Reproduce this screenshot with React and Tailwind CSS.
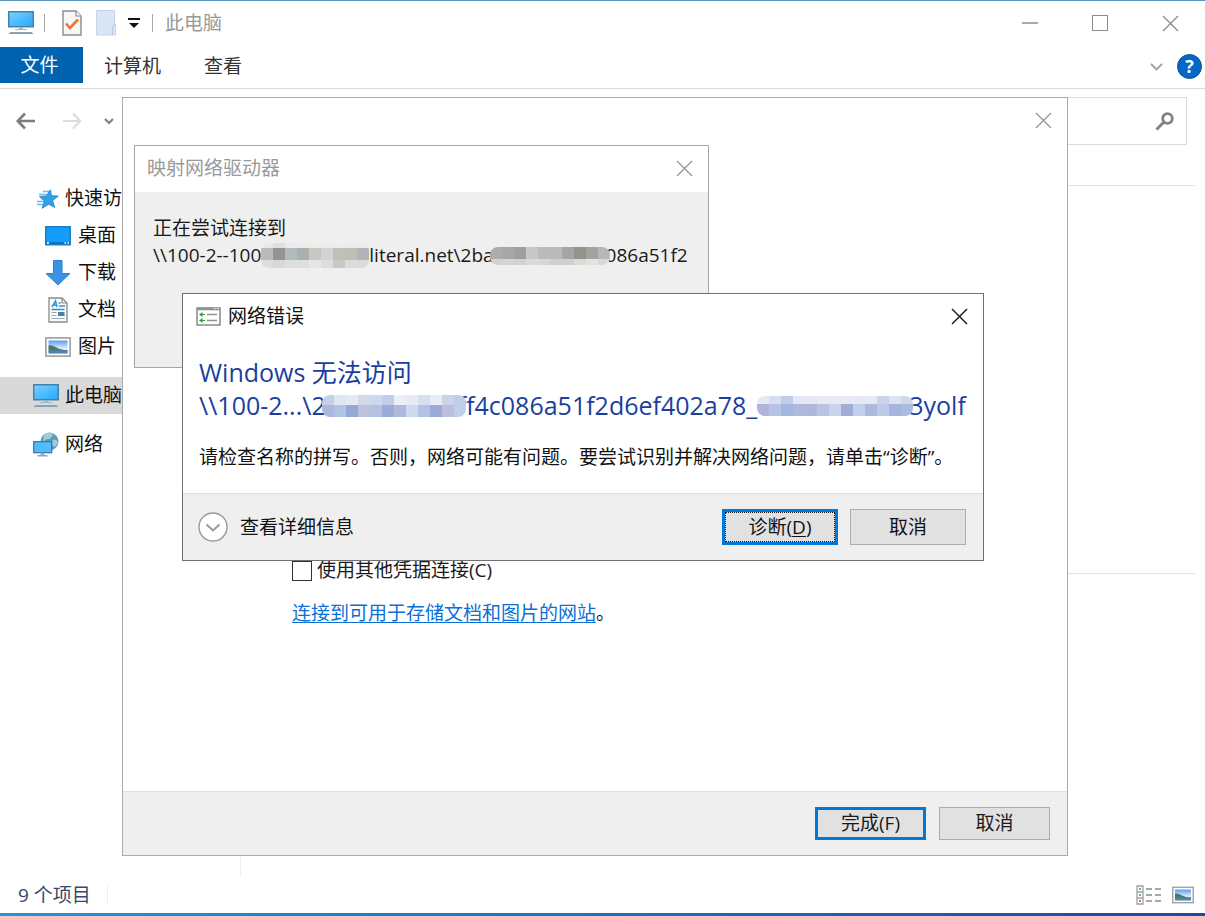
import React from "react";

const UI_FONT =
  "font-['Open_Sans','Noto_Sans_CJK_SC',sans-serif] text-[19px] leading-[27px]";

function CloseIcon() {
  return (
    <svg width="17" height="17" viewBox="0 0 17 17" fill="none" stroke="currentColor" strokeWidth="1.4">
      <path d="M1 1 L16 16 M16 1 L1 16" />
    </svg>
  );
}

function MonitorIcon() {
  return (
    <svg width="26" height="24" viewBox="0 0 26 24">
      <defs>
        <linearGradient id="screen" x1="0" y1="0" x2="1" y2="1">
          <stop offset="0" stopColor="#7fd0ff" />
          <stop offset="0.5" stopColor="#4fbcff" />
          <stop offset="1" stopColor="#2ba8f5" />
        </linearGradient>
      </defs>
      <rect x="0.75" y="0.75" width="24.5" height="15" fill="url(#screen)" stroke="#3c7fa8" strokeWidth="1.4" />
      <path d="M11 16.5h4v1.5h4v1H7v-1h4z" fill="#9fb6c6" />
      <path d="M2.5 21h21l2 2h-25z" fill="#8ba3b5" />
    </svg>
  );
}

function CheckPageIcon() {
  return (
    <svg width="20" height="26" viewBox="0 0 20 26" fill="none">
      <path d="M1 1h13l5 5v19H1z" fill="#f7f7f7" stroke="#8a8a8a" strokeWidth="1.4" />
      <path d="M14 1v5h5" stroke="#8a8a8a" strokeWidth="1.2" fill="#fff" />
      <path d="M4 13.5l4 4.5 8-8.5" stroke="#f0743a" strokeWidth="2.6" />
    </svg>
  );
}

function BlankPageIcon() {
  return (
    <svg width="20" height="26" viewBox="0 0 20 26">
      <path d="M0.5 0.5h18v13.5h1v11H0.5z" fill="#dae5f5" stroke="#c6d4ea" />
      <path d="M16.5 25v-8l2-2.5" fill="none" stroke="#b9c9e2" />
    </svg>
  );
}

function StarIcon() {
  return (
    <svg width="22" height="20" viewBox="0 0 22 20">
      <path d="M6 2.500h6M2 5.500h7M0 12.500h7M0 15.500h6" stroke="#65bdf0" strokeWidth="1.300" />
      <path d="M13.500 0.800l1 6 6.800 0.200-5.600 4.500 2 7-6-3.200-6.500 4 2.200-7.300-5-4.500 6.600-.5z" fill="#2fa2e8" stroke="#1d83c8" strokeWidth="0.800" />
    </svg>
  );
}

function DesktopIcon() {
  return (
    <svg width="26" height="20" viewBox="0 0 26 20">
      <rect x="0.75" y="0.75" width="24.500" height="18" fill="#149dfb" stroke="#1479c4" strokeWidth="1.4" />
      <path d="M1.500 17h23" stroke="#0a6cb8" strokeWidth="1.600" />
      <path d="M2 17h2M19.500 17h1.500M22.500 17h1.500" stroke="#fff" strokeWidth="1.400" />
    </svg>
  );
}

function DownloadIcon() {
  return (
    <svg width="26" height="26" viewBox="0 0 26 26">
      <path d="M8.500 0.500h8.500v13h8L13 25 1 13.500h7.500z" fill="#3a94e6" stroke="#2a80cf" />
    </svg>
  );
}

function DocumentIcon() {
  return (
    <svg width="20" height="26" viewBox="0 0 20 26" fill="none">
      <path d="M1 1h13l5 5v19H1z" fill="#fafafa" stroke="#8a8a8a" strokeWidth="1.300" />
      <path d="M14 1v5h5" stroke="#8a8a8a" strokeWidth="1.200" />
      <path d="M4 10l3.500-6 1.500 6M5.500 8h3M10.500 6h2M11 9h6M3.500 12.500h13" stroke="#2d93d8" strokeWidth="1.500" />
      <path d="M3.500 15.500h5M3.500 18.500h5M3.500 21.500h13" stroke="#9aa5ae" strokeWidth="1.200" />
      <path d="M10 15h6.500v4H10z" fill="#3e84ad" />
    </svg>
  );
}

function PictureIcon({ small }) {
  return (
    <svg width={small ? 22 : 26} height={small ? 18 : 20} viewBox="0 0 26 20">
      <defs>
        <linearGradient id="sky" x1="0" y1="0" x2="0" y2="1">
          <stop offset="0" stopColor="#5b9bf2" />
          <stop offset="0.600" stopColor="#dcebfa" />
          <stop offset="1" stopColor="#e8f3fa" />
        </linearGradient>
      </defs>
      <rect x="0.900" y="0.900" width="24.200" height="18.200" fill="#fff" stroke="#a3a3a3" strokeWidth="1.700" />
      <rect x="3.500" y="3.500" width="19" height="13" fill="url(#sky)" />
      <path d="M3.500 8.500c3-1 6 1 9 2.500s6 2 10 2v1.500h-19z" fill="#4a7a63" />
      <path d="M3.500 13.500c6-.5 12 0 19-.5v3.500h-19z" fill="#4f83ac" />
    </svg>
  );
}

function NetworkIcon() {
  return (
    <svg width="26" height="26" viewBox="0 0 26 26">
      <circle cx="16.500" cy="9.500" r="9" fill="#5b9dbb" />
      <path d="M11 3c3-3 8-3 9 0-2 2-2 4-5 4s-3 3-5 2zM20 8c3-1 5 1 5 3l-3 4-4-3z" fill="#9fcbdc" />
      <rect x="0.700" y="9.700" width="18" height="11" fill="#4fbdfd" stroke="#3477a0" strokeWidth="1.200" />
      <path d="M7.500 21.500h4v1.500h3v1.500h-10v-1.500h3z" fill="#8fa8ba" />
    </svg>
  );
}

function DialogIcon() {
  return (
    <svg width="25" height="19" viewBox="0 0 25 19" fill="none">
      <rect x="1" y="1" width="23" height="17" fill="#fff" stroke="#8d9296" strokeWidth="1.600" />
      <path d="M1 2h23" stroke="#8d9296" strokeWidth="2.500" />
      <path d="M18 1.500h1.500M21 1.500h1.500" stroke="#fff" />
      <path d="M11 7.500h10M11 13.500h10" stroke="#8d9296" strokeWidth="1.300" />
      <path d="M3 7.500l3.500-2.500v2h2.500v1H6.500v2zM3 13.500l3.500-2.500v2h2.500v1H6.500v2z" fill="#2f9e44" />
    </svg>
  );
}

// Pixelated strip that hides part of an address.
function Mosaic({ id, rows, heights, className }) {
  const width = rows[0].length * 12;
  const height = heights.reduce((a, b) => a + b, 0);
  let y = 0;
  return (
    <svg className={className} width={width} height={height} viewBox={`0 0 ${width} ${height}`} aria-hidden="true">
      <clipPath id={id}>
        <rect width={width} height={height} rx="8" />
      </clipPath>
      <g clipPath={`url(#${id})`}>
        {rows.map((row, r) => {
          const top = y;
          y += heights[r];
          return row.map((color, c) => (
            <rect key={`${r}-${c}`} x={c * 12} y={top} width="12" height={heights[r]} fill={color} />
          ));
        })}
      </g>
    </svg>
  );
}

const greyA = [
  ["#e9e9e9", "#dfdfde", "#eaeaea", "#ececec", "#ededed", "#ebebec", "#ededed", "#ececec", "#ececec"],
  ["#bcbab6", "#969392", "#b1bbbf", "#adafac", "#cac7c3", "#d3d2d5", "#c0bfb9", "#c2beb4", "#b0b3b8"],
  ["#dcdddd", "#d8d8d8", "#dddfdf", "#dedede", "#e6e6e6", "#dedede", "#c8c8c6", "#dcdcdc", "#dadada"],
];
const greyB = [
  ["#acacae", "#a7a8a4", "#9f9f9f", "#c9c8c9", "#bdbabb", "#b9babb", "#a5a6a2", "#91938c", "#a3a49f", "#b5b7ba"],
  ["#d2d2d3", "#d4d4d4", "#d3d3d3", "#dadada", "#d7d7d7", "#cfcfd0", "#d0d0cf", "#dbdbda", "#e3e3e2", "#d8d8d8"],
];
const blueA = [
  ["#c4cfe9", "#e0e7f4", "#e5eaf6", "#d4d9eb", "#ccd8ec", "#c3cfe8", "#ebeff8", "#e7ebf5", "#d6def0", "#e8ecf7", "#cbd3e8", "#c2cde7"],
  ["#adb9dc", "#afc3e3", "#98a8d6", "#bdc2dc", "#b5c1e2", "#9cacda", "#afb9dc", "#cdd9ec", "#b3c2e2", "#9babd8", "#bcbedb", "#bed0eb"],
];
const blueB = [
  ["#e5e9f5", "#d6def0", "#c2cce8", "#e4e8f4", "#e4e9f5", "#e7ebf6", "#e7ebf6", "#e6eaf5", "#e4e9f5", "#e6eaf6", "#cbd4ea", "#dce2f1", "#d0d9ec"],
  ["#b1b6d9", "#b5c3e4", "#a4b8df", "#b0b8db", "#acb8dc", "#b9c4e2", "#cad3e9", "#a1add7", "#c0d0ea", "#afb9dc", "#bdcae7", "#a6b5dd", "#a8bce1"],
];

const NAV = [
  { label: "快速访问", icon: <StarIcon />, pad: "pl-[37px] gap-[6px]" },
  { label: "桌面", icon: <DesktopIcon />, pad: "pl-[45px] gap-[7px]" },
  { label: "下载", icon: <DownloadIcon />, pad: "pl-[45px] gap-[7px]" },
  { label: "文档", icon: <DocumentIcon />, pad: "pl-[48px] gap-[10px]" },
  { label: "图片", icon: <PictureIcon />, pad: "pl-[45px] gap-[7px]" },
  { label: "此电脑", icon: <MonitorIcon />, pad: "pl-[33px] gap-[6px] mt-3 bg-[#d9d9d9]" },
  { label: "网络", icon: <NetworkIcon />, pad: "pl-[33px] gap-[6px] mt-3" },
];

function Explorer() {
  return (
    <div className="flex min-h-screen flex-col border-t border-[#5b93bd] bg-white">
      <header className="flex h-[44px] items-center justify-between">
        <div className="flex items-center pl-2 text-[#999]">
          <MonitorIcon />
          <span className="ml-[10px] h-[18px] w-px bg-[#a8a8a8]" />
          <button aria-label="属性" className="ml-[17px]"><CheckPageIcon /></button>
          <button aria-label="新建文件夹" className="ml-[14px]"><BlankPageIcon /></button>
          <button aria-label="自定义快速访问工具栏" className="ml-3">
            <svg width="12" height="10" viewBox="0 0 12 10">
              <path d="M0 1h12" stroke="#111" strokeWidth="2" />
              <path d="M1 5h10L6 10z" fill="#111" />
            </svg>
          </button>
          <span className="ml-3 h-[18px] w-px bg-[#a8a8a8]" />
          <h1 className="ml-3">此电脑</h1>
        </div>
        <div className="flex text-[#8c8c8c]">
          <button aria-label="最小化" className="flex h-9 w-[70px] items-center justify-center">
            <svg width="16" height="2"><path d="M0 1h16" stroke="currentColor" strokeWidth="1.500" /></svg>
          </button>
          <button aria-label="最大化" className="flex h-9 w-[70px] items-center justify-center">
            <span className="h-4 w-4 border border-current" />
          </button>
          <button aria-label="关闭" className="flex h-9 w-[70px] items-center justify-center">
            <CloseIcon />
          </button>
        </div>
      </header>

      <div className="flex h-[44px] items-start justify-between border-b border-[#dcdcdc] pt-[2px]">
        <nav className="flex text-[#333]">
          <button className="h-9 w-[83px] bg-[#0063b1] pr-1 text-white">文件</button>
          <button className="ml-[21px] h-9 pt-[2px]">计算机</button>
          <button className="ml-[43px] h-9 pt-[2px]">查看</button>
        </nav>
        <div className="flex items-center gap-[14px] pt-[7px] pr-[3px]">
          <button aria-label="展开功能区">
            <svg width="13" height="8" viewBox="0 0 13 8" fill="none" stroke="#a0a0a0" strokeWidth="1.800">
              <path d="M1 1l5.500 5.500L12 1" />
            </svg>
          </button>
          <button aria-label="帮助" className="flex h-[25px] w-[25px] items-center justify-center rounded-full border border-[#164f86] bg-[#0568c8] text-[18px] font-bold text-white">
            ?
          </button>
        </div>
      </div>

      <div className="flex items-center justify-between pt-2 pr-[18px] pl-4">
        <div className="flex items-center">
          <button aria-label="后退">
            <svg width="20" height="18" viewBox="0 0 20 18" fill="none" stroke="#7d7d7d" strokeWidth="2.600">
              <path d="M19 9H2M9 1.500L1.800 9 9 16.500" />
            </svg>
          </button>
          <button aria-label="前进" className="ml-[26px]">
            <svg width="20" height="18" viewBox="0 0 20 18" fill="none" stroke="#dcdcdc" strokeWidth="2.200">
              <path d="M1 9h17M11 1.500L18.200 9 11 16.500" />
            </svg>
          </button>
          <button aria-label="最近位置" className="ml-[22px]">
            <svg width="10" height="7" viewBox="0 0 10 7" fill="none" stroke="#808080" strokeWidth="2.200">
              <path d="M1 1l4 4 4-4" />
            </svg>
          </button>
        </div>
        <label className="flex h-[48px] w-[340px] items-center border border-[#dcdcdc] pr-3">
          <input aria-label="搜索" className="min-w-0 flex-1 bg-transparent outline-none" />
          <svg width="19" height="19" viewBox="0 0 19 19" fill="none" stroke="#828282">
            <circle cx="12.500" cy="6.500" r="4.800" strokeWidth="2.800" />
            <path d="M9 10L1.500 17.500" strokeWidth="3" />
          </svg>
        </label>
      </div>

      <div className="flex flex-1">
        <aside className="w-[241px] border-r border-[#f0f0f0] pt-[35px]">
          <ul>
            {NAV.map((n) => (
              <li key={n.label}>
                <a href="#" className={`flex h-[37px] items-center text-[#111] ${n.pad}`}>
                  {n.icon}
                  <span>{n.label}</span>
                </a>
              </li>
            ))}
          </ul>
        </aside>
        <main className="flex-1 pt-10 pr-[10px]">
          <hr className="border-[#e2e2e2]" />
          <hr className="mt-[387px] border-[#e2e2e2]" />
        </main>
      </div>

      <footer className="flex h-9 items-center justify-between pr-[11px] pl-[18px] text-[#34496b]">
        <div className="flex items-center gap-4">
          <span>9 个项目</span>
          <span className="h-[18px] w-px bg-[#eeeeee]" />
        </div>
        <div className="flex items-center gap-[10px]">
          <button aria-label="详细信息">
            <svg width="26" height="20" viewBox="0 0 26 20" fill="none">
              <path d="M1 1h6v18H1zM1 7h6M1 13h6" stroke="#a0a0a0" strokeWidth="1.300" />
              <path d="M10 4h6M19 4h6M10 10h6M19 10h6M10 16h6M19 16h6" stroke="#8c8c8c" strokeWidth="1.500" />
              <path d="M3 4h2" stroke="#3e9c60" strokeWidth="1.500" />
              <path d="M3 10h2" stroke="#2b8cf0" strokeWidth="1.500" />
              <path d="M3 16h2" stroke="#e33" strokeWidth="1.500" />
            </svg>
          </button>
          <button aria-label="大图标"><PictureIcon small /></button>
        </div>
      </footer>
      <div className="h-[3px] bg-gradient-to-r from-[#1b9ad0] to-[#1d4a9c]" />
    </div>
  );
}

function MapDriveWizard() {
  return (
    <section role="dialog" aria-label="映射网络驱动器向导" className="absolute top-[97px] left-[122px] flex h-[759px] w-[946px] flex-col border border-[#ababab] bg-white text-[#1a1a1a]">
      <div className="flex h-[44px] items-center justify-end pr-[15px] text-[#999]">
        <button aria-label="关闭"><CloseIcon /></button>
      </div>
      <div className="flex-1 pt-[415px] pl-[169px]">
        <label className="flex items-center gap-[5px]">
          <input type="checkbox" className="h-5 w-5 appearance-none border border-[#333] bg-white" />
          <span>使用其他凭据连接(C)</span>
        </label>
        <p className="mt-4">
          <a href="#" className="text-[#0a6fd6] underline underline-offset-2">连接到可用于存储文档和图片的网站</a>。
        </p>
      </div>
      <div className="flex h-[64px] items-center justify-end gap-[13px] border-t border-[#dfdfdf] bg-[#efefef] pr-[17px]">
        <button className="h-[33px] w-[111px] border-3 border-[#0078d7] bg-[#e1e1e1]">完成(F)</button>
        <button className="h-[33px] w-[111px] border border-[#adadad] bg-[#e1e1e1]">取消</button>
      </div>
    </section>
  );
}

function ConnectingDialog() {
  return (
    <section role="dialog" aria-label="映射网络驱动器" className="absolute top-[145px] left-[134px] flex h-[223px] w-[575px] flex-col border border-[#a6a6a6] bg-[#efefef] text-[#1a1a1a]">
      <div className="flex h-[46px] items-center justify-between bg-white pr-[15px] pb-[2px] pl-3 text-[#999]">
        <h2>映射网络驱动器</h2>
        <button aria-label="关闭"><CloseIcon /></button>
      </div>
      <div className="pt-[23px] pr-[19px] pl-[18px]">
        <p>正在尝试连接到</p>
        <p className="flex items-center whitespace-nowrap">
          <span>\\100-2--100</span>
          <Mosaic id="hide-host" rows={greyA} heights={[5, 12, 8]} className="relative shrink-0" />
          <span>literal.net\2ba</span>
          <Mosaic id="hide-share" rows={greyB} heights={[12, 6]} className="relative -mx-1 shrink-0" />
          <span>086a51f2</span>
        </p>
      </div>
    </section>
  );
}

function NetworkErrorDialog() {
  return (
    <section role="dialog" aria-label="网络错误" className="absolute top-[293px] left-[182px] flex h-[268px] w-[802px] flex-col border border-[#707070] bg-white text-[#111]">
      <div className="flex h-[45px] items-center justify-between pr-[15px] pl-[13px]">
        <div className="flex items-center gap-[7px]">
          <DialogIcon />
          <h2>网络错误</h2>
        </div>
        <button aria-label="关闭"><CloseIcon /></button>
      </div>
      <div className="flex-1 px-4 pt-[17px]">
        <div className="text-[25px] leading-[33px] text-[#1a3f9e]">
          <p>Windows 无法访问</p>
          <p className="flex items-center whitespace-nowrap">
            <span>\\100-2...\2</span>
            <Mosaic id="hide-first" rows={blueA} heights={[10, 12]} className="relative -mr-2 -ml-1 shrink-0" />
            <span>ff4c086a51f2d6ef402a78_</span>
            <Mosaic id="hide-last" rows={blueB} heights={[8, 12]} className="relative -mr-1 shrink-0" />
            <span>3yolf</span>
          </p>
        </div>
        <p className="mt-[22px] whitespace-nowrap">
          请检查名称的拼写。否则，网络可能有问题。要尝试识别并解决网络问题，请单击“诊断”。
        </p>
      </div>
      <div className="flex h-[67px] items-center justify-between border-t border-[#dfdfdf] bg-[#efefef] pr-[17px] pl-[15px]">
        <button className="flex items-center gap-3">
          <svg width="30" height="30" viewBox="0 0 30 30" fill="none">
            <circle cx="15" cy="15" r="14" fill="#fff" stroke="#999" strokeWidth="1.400" />
            <path d="M8.500 12.500l6.500 6 6.500-6" stroke="#999" strokeWidth="1.800" />
          </svg>
          <span>查看详细信息</span>
        </button>
        <div className="flex gap-3">
          <button className="h-9 w-[116px] border-3 border-[#0078d7] bg-[#e1e1e1]">
            <span className="flex h-full items-center justify-center border border-dotted border-[#111]">
              诊断(<u className="underline-offset-2">D</u>)
            </span>
          </button>
          <button className="h-9 w-[116px] border border-[#adadad] bg-[#e1e1e1]">取消</button>
        </div>
      </div>
    </section>
  );
}

export default function App() {
  return (
    <div className={`relative min-h-screen overflow-hidden ${UI_FONT}`}>
      <Explorer />
      <MapDriveWizard />
      <ConnectingDialog />
      <NetworkErrorDialog />
    </div>
  );
}
